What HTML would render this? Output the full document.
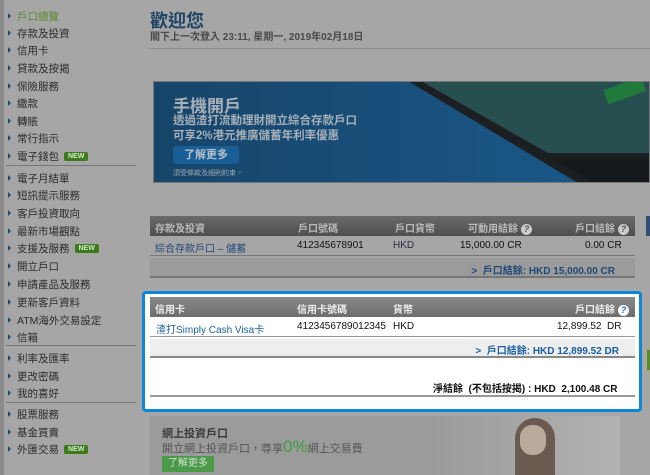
<!DOCTYPE html>
<html><head><meta charset="utf-8"><style>
*{margin:0;padding:0;box-sizing:border-box}
body{width:650px;height:475px;overflow:hidden;background:#a6a6a6;font-family:"Liberation Sans","Noto Sans CJK TC",sans-serif;position:relative}
.strip{position:absolute;left:0;top:0;width:4px;height:475px;background:#8a8a8a}
.nav{position:absolute;left:8px;font-size:10.5px;color:#2b2b2b;white-space:nowrap}
.nav:before{content:"";display:inline-block;border-left:3px solid #1d4c70;border-top:3px solid transparent;border-bottom:3px solid transparent;margin-right:6px;vertical-align:1px}
.new{display:inline-block;background:#3c7a1c;color:#d8e8d0;font-size:7px;font-weight:bold;padding:1px 4px;border-radius:2px;margin-left:5px;vertical-align:2px}
.sep{position:absolute;left:6px;width:130px;height:1px;background:#777}
.abs{position:absolute}
.th{position:absolute;height:20px;background:linear-gradient(#6a6a6a,#4f4f4f);color:#bbb;font-size:10px;font-weight:bold}
.th span,.row span{position:absolute;top:4px;white-space:nowrap}
.q{display:inline-block;width:11px;height:11px;border-radius:50%;background:#ccc;color:#555;font-size:9px;text-align:center;line-height:11px;margin-left:3px}
.row{position:absolute;font-size:10px;color:#111}
</style></head><body>
<div class="strip"></div>
<div class="nav" style="top:9px;color:#5a8a2a">戶口總覽</div>
<div class="nav" style="top:26px">存款及投資</div>
<div class="nav" style="top:43px">信用卡</div>
<div class="nav" style="top:61px">貸款及按揭</div>
<div class="nav" style="top:79px">保險服務</div>
<div class="nav" style="top:96px">繳款</div>
<div class="nav" style="top:114px">轉賬</div>
<div class="nav" style="top:131px">常行指示</div>
<div class="nav" style="top:149px">電子錢包<span class="new">NEW</span></div>
<div class="sep" style="top:165px"></div>
<div class="nav" style="top:171px">電子月結單</div>
<div class="nav" style="top:188px">短訊提示服務</div>
<div class="nav" style="top:206px">客戶投資取向</div>
<div class="nav" style="top:224px">最新市場觀點</div>
<div class="nav" style="top:241px">支援及服務<span class="new">NEW</span></div>
<div class="nav" style="top:259px">開立戶口</div>
<div class="nav" style="top:277px">申請產品及服務</div>
<div class="nav" style="top:295px">更新客戶資料</div>
<div class="nav" style="top:313px">ATM海外交易設定</div>
<div class="nav" style="top:330px">信箱</div>
<div class="sep" style="top:345px"></div>
<div class="nav" style="top:351px">利率及匯率</div>
<div class="nav" style="top:369px">更改密碼</div>
<div class="nav" style="top:386px">我的喜好</div>
<div class="sep" style="top:402px"></div>
<div class="nav" style="top:407px">股票服務</div>
<div class="nav" style="top:425px">基金買賣</div>
<div class="nav" style="top:442px">外匯交易<span class="new">NEW</span></div>

<div class="abs" style="left:150px;top:7px;font-size:18px;font-weight:bold;color:#1f4466">歡迎您</div>
<div class="abs" style="left:150px;top:28px;font-size:10px;font-weight:bold;color:#4a4a4a">閣下上一次登入 23:11, 星期一, 2019年02月18日</div>
<div class="abs" style="left:150px;top:48px;width:500px;height:1px;background:#8d8d8d"></div>

<svg class="abs" style="left:153px;top:81px" width="497" height="102">
<defs><linearGradient id="g" x1="0" x2="1"><stop offset="0" stop-color="#17456a"/><stop offset="1" stop-color="#1a5a8c"/></linearGradient></defs>
<rect width="497" height="102" fill="url(#g)"/>
<polygon points="255,0 497,0 497,102 425,102" fill="#1c1f22"/>
<polygon points="268,0 497,0 497,72 395,72" fill="#284f50"/>
<polygon points="400,78 497,78 497,102 440,102" fill="#15191b"/>
<rect x="452" y="2" width="40" height="15" fill="#1f7a3b" transform="rotate(-20 472 10)"/>
<rect x="0.5" y="0.5" width="496" height="101" fill="none" stroke="#777"/>
</svg>
<div class="abs" style="left:173px;top:92px;font-size:17px;font-weight:bold;color:#a8b0b8">手機開戶</div>
<div class="abs" style="left:173px;top:114px;font-size:11.5px;font-weight:bold;color:#a8b0b8;line-height:15px">透過渣打流動理財開立綜合存款戶口<br>可享2%港元推廣儲蓄年利率優惠</div>
<div class="abs" style="left:173px;top:146px;width:66px;height:18px;background:#1a5e96;border-radius:3px;color:#b6c0ca;font-size:11px;font-weight:bold;text-align:center;line-height:18px">了解更多</div>
<div class="abs" style="left:173px;top:168px;font-size:7px;color:#a0a8b0">須受條款及細則約束。</div>

<div class="th" style="left:150px;top:216px;width:485px"><span style="left:5px">存款及投資</span><span style="left:148px">戶口號碼</span><span style="left:245px">戶口貨幣</span><span style="left:318px">可動用結餘<i class="q">?</i></span><span style="left:425px">戶口結餘<i class="q">?</i></span></div>
<div class="row" style="left:150px;top:236px;width:485px;height:20px;border-bottom:1px solid #777"><span style="left:5px;color:#1e4878">綜合存款戶口 – 儲蓄</span><span style="left:147px">412345678901</span><span style="left:243px;color:#2a2a4a">HKD</span><span style="left:310px">15,000.00 CR</span><span style="left:435px">0.00 CR</span></div>
<div class="row" style="left:150px;top:258px;width:485px;height:20px;background:#9b9b9b;border-bottom:2px solid #777"><span style="right:20px;font-weight:bold;color:#1e4878">&gt;&nbsp; 戶口結餘: HKD 15,000.00 CR</span></div>

<div class="abs" style="left:142px;top:291px;width:500px;height:121px;background:#fff;border:3px solid #0b86d8;border-radius:4px"></div>
<div class="th" style="left:150px;top:297px;width:485px;background:linear-gradient(#8a8a8a,#6d6d6d);color:#eee"><span style="left:5px">信用卡</span><span style="left:147px">信用卡號碼</span><span style="left:243px">貨幣</span><span style="left:425px">戶口結餘<i class="q" style="background:#fff;color:#1a6fb3">?</i></span></div>
<div class="row" style="left:150px;top:317px;width:485px;height:20px;border-bottom:1px solid #999"><span style="left:6px;color:#1a5fa0">渣打Simply Cash Visa卡</span><span style="left:147px">4123456789012345</span><span style="left:243px">HKD</span><span style="left:407px">12,899.52&nbsp; DR</span></div>
<div class="row" style="left:150px;top:339px;width:485px;height:19px;background:#eee;border-bottom:2px solid #888"><span style="right:16px;top:3px;font-weight:bold;color:#1a5fa0">&gt;&nbsp; 戶口結餘: HKD 12,899.52 DR</span></div>
<div class="row" style="left:150px;top:377px;width:485px;height:20px;border-bottom:2px solid #999"><span style="left:283px;top:3px;font-weight:bold">淨結餘 &nbsp;(不包括按揭) : HKD &nbsp;2,100.48 CR</span></div>

<div class="abs" style="left:150px;top:416px;width:470px;height:59px;background:linear-gradient(90deg,#9b9b9b 60%,#b2b2b2 100%)"></div>
<div class="abs" style="left:515px;top:418px;width:40px;height:57px;background:#6a5a50;border-radius:20px 20px 0 0"></div>
<div class="abs" style="left:520px;top:425px;width:26px;height:30px;background:#b9aa9c;border-radius:12px"></div>
<div class="abs" style="left:162px;top:425px;font-size:11px;font-weight:bold;color:#3a3a3a">網上投資戶口</div>
<div class="abs" style="left:162px;top:437px;font-size:11px;color:#555">開立網上投資戶口，尊享<span style="font-size:17px;color:#3e9e3e">0%</span>網上交易費</div>
<div class="abs" style="left:162px;top:456px;width:52px;height:16px;background:#4a9a4a;color:#cde0cd;font-size:10px;text-align:center;line-height:16px">了解更多</div>
<div class="abs" style="left:646px;top:216px;width:4px;height:20px;background:#2d4e6e"></div>
<div class="abs" style="left:647px;top:350px;width:3px;height:20px;background:#5a8a2a"></div>
</body></html>
